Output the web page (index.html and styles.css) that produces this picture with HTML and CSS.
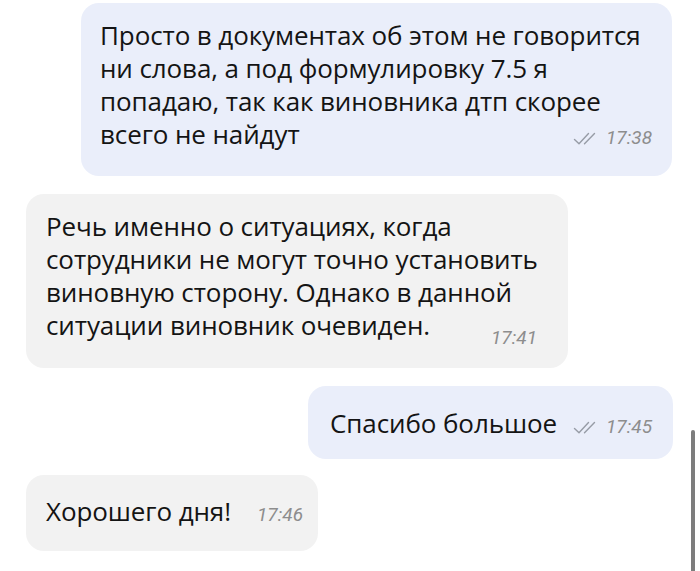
FILE: index.html
```html
<!DOCTYPE html>
<html lang="ru">
<head>
<meta charset="utf-8">
<link rel="stylesheet" href="styles.css">
</head>
<body>
<div class="chat">
  <div class="msg out b1">
    <div class="line">Просто в документах об этом не говорится</div>
    <div class="line">ни слова, а под формулировку 7.5 я</div>
    <div class="line">попадаю, так как виновника дтп скорее</div>
    <div class="last">
      <span class="txt">всего не найдут</span>
      <span class="meta"><svg class="ticks" viewBox="0 0 25 13" width="25" height="13"><path d="M1.5 7.5 L6 11.8 L15.5 1.5 M11.5 11.8 L21.5 1.5" fill="none" stroke="#979ca6" stroke-width="1.4" stroke-linecap="round" stroke-linejoin="round"/></svg><span class="time">17:38</span></span>
    </div>
  </div>

  <div class="msg in b2">
    <div class="line">Речь именно о ситуациях, когда</div>
    <div class="line">сотрудники не могут точно установить</div>
    <div class="line">виновную сторону. Однако в данной</div>
    <div class="last low">
      <span class="txt">ситуации виновник очевиден.</span>
      <span class="meta"><span class="time">17:41</span></span>
    </div>
  </div>

  <div class="msg out b3">
    <div class="last">
      <span class="txt">Спасибо большое</span>
      <span class="meta"><svg class="ticks" viewBox="0 0 25 13" width="25" height="13"><path d="M1.5 7.5 L6 11.8 L15.5 1.5 M11.5 11.8 L21.5 1.5" fill="none" stroke="#979ca6" stroke-width="1.4" stroke-linecap="round" stroke-linejoin="round"/></svg><span class="time">17:45</span></span>
    </div>
  </div>

  <div class="msg in b4">
    <div class="last">
      <span class="txt">Хорошего дня!</span>
      <span class="meta"><span class="time">17:46</span></span>
    </div>
  </div>
</div>
<div class="scrollbar"></div>
</body>
</html>
```

FILE: styles.css
```css
html, body {
  margin: 0;
  padding: 0;
  background: #ffffff;
}
body {
  width: 700px;
  height: 571px;
  overflow: hidden;
  font-family: "Open Sans", "Noto Sans", sans-serif;
  color: #141414;
}
.chat {
  display: flex;
  flex-direction: column;
  padding-top: 3px;
}
.msg {
  box-sizing: border-box;
  border-radius: 18px;
  font-size: 26px;
  line-height: 33px;
  letter-spacing: -0.1px;
}
.line, .txt {
  white-space: nowrap;
}
.out { background: #eaeefa; }
.in { background: #f2f2f2; }

.b1 {
  margin-left: 81px;
  width: 591px;
  padding: 16px 20px 25px 19px;
}
.b2 {
  margin-top: 18px;
  margin-left: 26px;
  width: 542px;
  padding: 16px 21px 26px 20px;
}
.b2 .meta {
  margin-right: 10px;
}
.b3 {
  margin-top: 18px;
  margin-left: 308px;
  width: 365px;
  padding: 21px 21px 19px 22px;
}
.b4 {
  margin-top: 16px;
  margin-left: 26px;
  width: 292px;
  padding: 20px 15px 23px 20px;
}
.last {
  display: flex;
  justify-content: space-between;
  align-items: baseline;
}
.last.low {
  align-items: flex-end;
}
.last.low .meta {
  line-height: 20px;
  margin-bottom: -6px;
}
.meta {
  display: flex;
  align-items: baseline;
  gap: 8px;
  font-family: Roboto, sans-serif;
  font-size: 19px;
  line-height: 26px;
  font-style: italic;
  color: #8d8d8d;
  letter-spacing: 0;
}
.ticks {
  align-self: center;
}
.scrollbar {
  position: absolute;
  left: 691px;
  top: 430px;
  width: 4px;
  height: 150px;
  border-radius: 2px;
  background: #7d7d7d;
}
```
